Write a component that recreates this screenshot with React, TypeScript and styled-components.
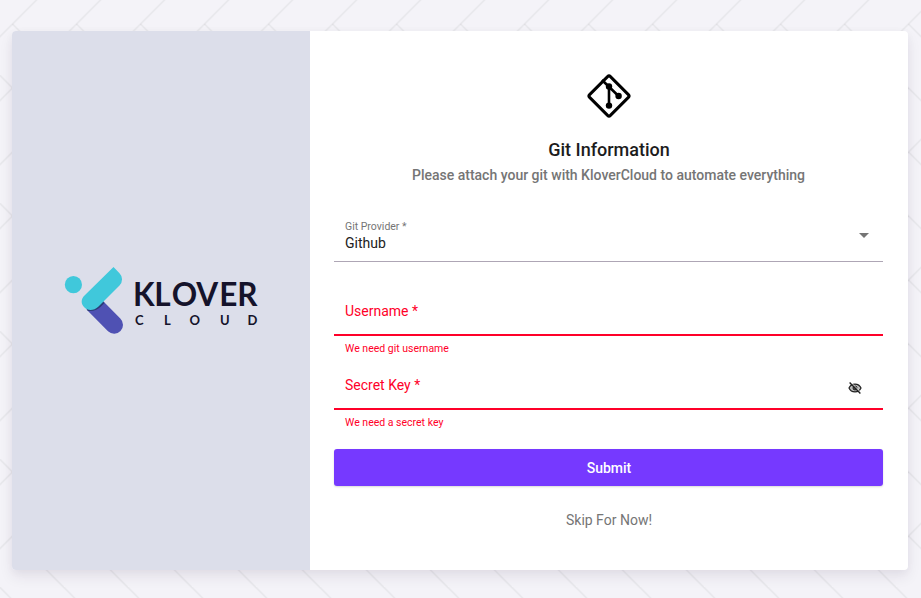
import React from 'react';
import styled, { createGlobalStyle, css } from 'styled-components';

const tile = encodeURIComponent(
  `<svg xmlns="http://www.w3.org/2000/svg" width="64" height="128" viewBox="0 0 64 128"><g stroke="#000" stroke-opacity="0.045" stroke-width="1.7" fill="none">${[-128, 0, 128]
    .map((dy) =>
      [-128, -64, 0, 64, 128, 192]
        .map(
          (dx) =>
            `<path d="M${12.5 + dx} ${24 + dy}l96 96"/><path d="M${12.5 + dx} ${88 + dy}l-96 96"/>`
        )
        .join('')
    )
    .join('')}</g></svg>`
);

const GlobalStyle = createGlobalStyle`
  * { box-sizing: border-box; }
  body {
    margin: 0;
    font-family: Roboto, sans-serif;
    background: #f4f3f8 url("data:image/svg+xml,${tile}");
  }
`;

const Page = styled.main`
  height: 598px;
  padding: 31px 13px 28px 12px;
`;

const Card = styled.section`
  display: grid;
  grid-template-columns: 298px 1fr;
  height: 539px;
  border-radius: 4px;
  overflow: hidden;
  background: #fff;
  box-shadow: 0 7px 14px rgba(50, 20, 70, 0.08), 0 2px 8px rgba(50, 20, 70, 0.04);
`;

const Brand = styled.aside`
  display: flex;
  align-items: center;
  justify-content: center;
  padding-bottom: 1px;
  background: #dcdeea;
`;

const Panel = styled.form`
  display: flex;
  flex-direction: column;
  align-items: stretch;
  padding: 43px 25px 0 24px;
`;

const GitMark = styled.svg`
  display: block;
  width: 44px;
  height: 44px;
  align-self: center;
  overflow: visible;
`;

const Title = styled.h1`
  margin: 19px 0 0;
  padding-left: 1px;
  font-size: 18px;
  font-weight: 500;
  line-height: 26px;
  text-align: center;
  color: #1c1c1c;
`;

const Subtitle = styled.p`
  margin: 2px 0 0;
  font-size: 14px;
  font-weight: 500;
  line-height: 20px;
  text-align: center;
  color: #757575;
`;

const Field = styled.div<{ $invalid?: boolean }>`
  display: flex;
  align-items: center;
  justify-content: space-between;
  height: 52px;
  padding: 0 11px;
  border-bottom: 1px solid #aea6b5;
  ${(p) =>
    p.$invalid &&
    css`
      height: 50px;
      padding-top: 2px;
      border-bottom: 2px solid #ff0029;
    `}
`;

const Provider = styled(Field)`
  margin-top: 25px;
`;

const FieldText = styled.div`
  display: flex;
  flex-direction: column;
`;

const SmallLabel = styled.span`
  margin-top: 1px;
  font-size: 10.5px;
  line-height: 14px;
  color: #757575;
`;

const Value = styled.span`
  margin-top: -1px;
  font-size: 14px;
  line-height: 20px;
  color: #212121;
`;

const Caret = styled.span`
  width: 0;
  height: 0;
  margin: 0 3px 0 0;
  border: 5px solid transparent;
  border-top-color: #757575;
  border-bottom: 0;
`;

const Group = styled.div<{ $gap: number }>`
  margin-top: ${(p) => p.$gap}px;
`;

const Label = styled.label`
  font-size: 14px;
  line-height: 20px;
  color: #ff0029;
`;

const EyeOff = styled.svg`
  width: 14px;
  height: 14px;
  margin: 5px 10px 0 0;
`;

const Hint = styled.p`
  margin: 5px 11px 0;
  font-size: 10.5px;
  line-height: 16px;
  color: #ff0029;
`;

const Submit = styled.button`
  height: 37px;
  margin: 18px 0 0;
  padding: 0 0 0 1px;
  border: 0;
  border-radius: 3px;
  background: #7639ff;
  color: #fff;
  font: 500 14px/38px Roboto, sans-serif;
  box-shadow: 0 1px 2px rgba(0, 0, 0, 0.15);
`;

const Skip = styled.a`
  margin-top: 24px;
  padding-left: 1px;
  font-size: 14px;
  line-height: 20px;
  text-align: center;
  color: #757575;
`;

const Logo = () => (
  <svg width="194" height="68" viewBox="64 266 194 68">
    <circle cx="73.4" cy="284.7" r="8.6" fill="#40c8db" />
    <path d="M86.5 309.5L103 301L120.3 318.6A8.7 8.7 0 0 1 108 331.3Z" fill="#4f51b3" />
    <path d="M88 311C94 311.5 98 309.5 101 306.5L104.5 303L102 300.5L86 308Z" fill="#2b3c76" />
    <path
      d="M113.5 267L119.5 273.2A8.7 8.7 0 0 1 119.5 285.5L98.5 306.5C94 311 87.5 311 84.5 307.5C80.5 304 81 298.5 84.5 295.5Z"
      fill="#40c8db"
    />
    <text
      x="133 154.2 171.8 196.2 219.2 237.3"
      y="306"
      fontFamily="Lato, sans-serif"
      fontWeight="700"
      fontSize="31.5"
      fill="#15132b"
    >
      KLOVER
    </text>
    <text
      x="134.9 164 189.5 220 247.4"
      y="324.5"
      fontFamily="Lato, sans-serif"
      fontWeight="700"
      fontSize="13"
      fill="#15132b"
    >
      CLOUD
    </text>
  </svg>
);

export default function App() {
  return (
    <>
      <GlobalStyle />
      <Page>
        <Card>
          <Brand>
            <Logo />
          </Brand>
          <Panel>
            <GitMark viewBox="0 0 44 44" fill="none" stroke="#000">
              <rect x="7.3" y="7.3" width="29.4" height="29.4" rx="2" transform="rotate(45 22 22)" strokeWidth="3" />
              <path d="M15 6L31.5 22M22 12.5V32" strokeWidth="2.6" />
              <g fill="#000" stroke="none">
                <circle cx="22" cy="12.5" r="3.2" />
                <circle cx="31.6" cy="22" r="3.2" />
                <circle cx="22" cy="31.6" r="3.2" />
              </g>
            </GitMark>
            <Title>Git Information</Title>
            <Subtitle>Please attach your git with KloverCloud to automate everything</Subtitle>
            <Provider>
              <FieldText>
                <SmallLabel>Git Provider *</SmallLabel>
                <Value>Github</Value>
              </FieldText>
              <Caret />
            </Provider>
            <Group $gap={24}>
              <Field $invalid>
                <Label>Username *</Label>
              </Field>
              <Hint>We need git username</Hint>
            </Group>
            <Group $gap={3}>
              <Field $invalid>
                <Label>Secret Key *</Label>
                <EyeOff viewBox="0 0 14 14" fill="none" stroke="#212121">
                  <path d="M1 7C3.2 1.8 10.8 1.8 13 7C10.8 12.2 3.2 12.2 1 7Z" fill="#bdbdbd" strokeWidth="1.2" />
                  <circle cx="7" cy="7" r="2" fill="#555" strokeWidth="1" />
                  <path d="M2.6 1.2L13.2 11.8" stroke="#fff" strokeWidth="1" />
                  <path d="M1.6 1.6L12.4 12.6" strokeWidth="1.4" />
                </EyeOff>
              </Field>
              <Hint>We need a secret key</Hint>
            </Group>
            <Submit type="button">Submit</Submit>
            <Skip>Skip For Now!</Skip>
          </Panel>
        </Card>
      </Page>
    </>
  );
}
